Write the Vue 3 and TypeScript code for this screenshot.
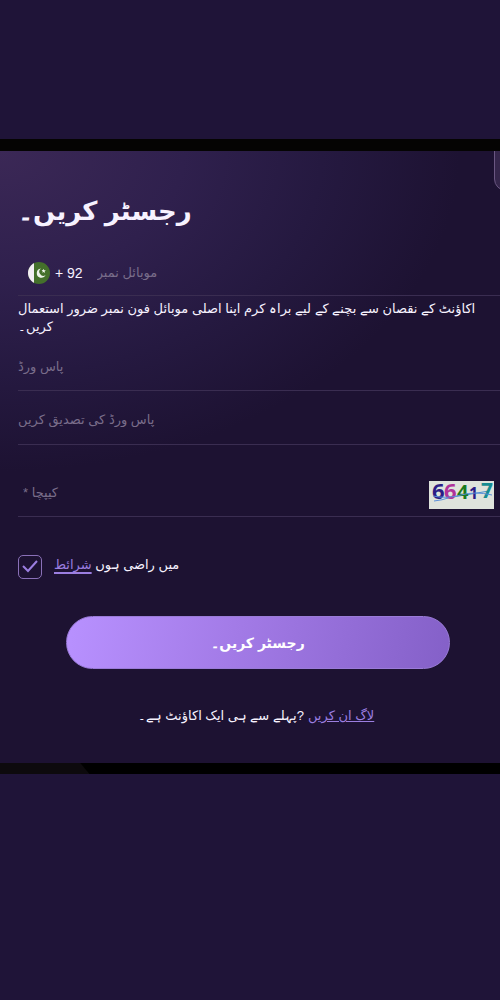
<script setup lang="ts">
import { ref } from 'vue'

const mobile = ref('')
const password = ref('')
const confirmation = ref('')
const captcha = ref('')
const agreed = ref(true)
</script>

<template>
  <div class="page" lang="ur">
    <div class="bar top"></div>
    <main class="panel">
      <div class="corner"></div>
      <h1>رجسٹر کریں۔</h1>
      <form @submit.prevent>
        <div class="field phone">
          <svg class="flag" viewBox="0 0 22 22" aria-hidden="true">
            <defs>
              <clipPath id="disc"><circle cx="11" cy="11" r="11" /></clipPath>
            </defs>
            <g clip-path="url(#disc)">
              <rect width="22" height="22" fill="#44702b" />
              <rect width="6" height="22" fill="#f3eef4" />
              <path d="M13 6.6a4.6 4.6 0 1 0 4.6 6.4 3.7 3.7 0 1 1-4.6-6.4z" fill="#eef3ea" />
              <path d="M15.6 6.8l.7 1.4 1.6.1-1.2 1 .4 1.6-1.4-.9-1.4.7.4-1.5-1.1-1.1 1.5-.1z" fill="#eef3ea" />
            </g>
          </svg>
          <span class="code">+ 92</span>
          <input v-model="mobile" type="tel" placeholder="موبائل نمبر" aria-label="موبائل نمبر" />
        </div>
        <p class="hint">اکاؤنٹ کے نقصان سے بچنے کے لیے براہ کرم اپنا اصلی موبائل فون نمبر ضرور استعمال کریں۔</p>
        <div class="field password">
          <input v-model="password" type="password" placeholder="پاس ورڈ" aria-label="پاس ورڈ" />
        </div>
        <div class="field confirm">
          <input v-model="confirmation" type="password" placeholder="پاس ورڈ کی تصدیق کریں" aria-label="پاس ورڈ کی تصدیق کریں" />
        </div>
        <div class="field captcha">
          <input v-model="captcha" type="text" placeholder="* کیپچا" aria-label="کیپچا" />
          <svg class="code-image" viewBox="0 0 65 28" role="img" aria-label="66417">
            <rect width="65" height="28" fill="#dfe3dc" />
            <path d="M18 17L60 10" stroke="#4a8fd0" fill="none" />
            <g font-family="Noto Sans" font-weight="bold">
              <text x="3" y="18" font-size="22" fill="#2b1c86">6</text>
              <text x="15" y="18" font-size="22" fill="#b0329a">6</text>
              <text x="28" y="18" font-size="20" fill="#197a1c">4</text>
              <text x="40" y="18" font-size="16" fill="#2b1c86">1</text>
              <text x="52" y="17" font-size="21" fill="#168c92">7</text>
            </g>
            <path d="M4 15q14 3 28-1t31 0M5 20q9-1 14-3" stroke="#5b8fd8" fill="none" />
          </svg>
        </div>
        <div class="terms">
          <input id="agree" v-model="agreed" type="checkbox" />
          <label for="agree">میں راضی ہوں <a href="#terms">شرائط</a></label>
        </div>
        <button type="submit">رجسٹر کریں۔</button>
      </form>
      <p class="login"><span>پہلے سے ہی ایک اکاؤنٹ ہے۔?</span><a href="#login">لاگ ان کریں</a></p>
    </main>
    <div class="bar bottom"></div>
  </div>
</template>

<style>
body {
  margin: 0;
  background: #1f1438;
}
</style>

<style scoped>
.page {
  box-sizing: border-box;
  min-height: 100vh;
  padding: 139px 0;
  background: #1f1438;
  color: #f7f2ff;
  font-family: "Liberation Sans", "DejaVu Sans", sans-serif;
  font-size: 13px;
}
.bar {
  height: 12px;
  background: #050403;
}
.bottom {
  height: 11px;
  background: linear-gradient(50deg, #0d0a0d 68px, #000 69px);
}
.panel {
  position: relative;
  overflow: hidden;
  padding: 36px 0 36px 18px;
  background: radial-gradient(ellipse 460px 320px at 0 0, #3b2856, #2f204d 40%, #251940 70%, #1d1232) #1d1232;
}
.corner {
  position: absolute;
  top: -12px;
  right: -20px;
  width: 26px;
  height: 52px;
  box-sizing: border-box;
  border: 1px solid #6b5782;
  border-radius: 12px;
  background: #35264b;
}
h1 {
  margin: 0;
  font-size: 26px;
  line-height: 48px;
}
.field {
  display: flex;
  align-items: center;
  border-bottom: 1px solid #3a2d51;
}
.field input {
  flex: 1;
  min-width: 0;
  padding: 0;
  border: 0;
  outline: 0;
  background: none;
  color: #f7f2ff;
  font: inherit;
  line-height: 24px;
}
.field input::placeholder {
  color: #796d8a;
  opacity: 1;
}
.phone {
  height: 44px;
  margin-top: 16px;
  padding-left: 10px;
}
.flag {
  width: 22px;
  height: 22px;
}
.code {
  margin: 0 14px 0 5px;
  font-size: 14px;
}
.hint {
  margin: 4px 18px 0 0;
  line-height: 18px;
}
.password {
  height: 46px;
  margin-top: 8px;
}
.confirm {
  height: 49px;
  padding-top: 4px;
}
.captcha {
  height: 47px;
  margin-top: 24px;
}
.captcha input {
  padding-left: 5px;
}
.code-image {
  width: 65px;
  height: 28px;
  margin: 4px 6px 0 0;
  overflow: visible;
}
.terms {
  display: flex;
  align-items: flex-start;
  gap: 12px;
  margin-top: 38px;
}
.terms label {
  line-height: 20px;
}
.terms input {
  appearance: none;
  box-sizing: border-box;
  width: 24px;
  height: 24px;
  margin: 0;
  border: 1px solid #8a70b8;
  border-radius: 5px;
}
.terms input:checked {
  background: url("data:image/svg+xml,%3Csvg xmlns='http://www.w3.org/2000/svg' viewBox='0 0 22 22'%3E%3Cpath d='M4 10l5 5 9-10' fill='none' stroke='%239b7ee0' stroke-width='2'/%3E%3C/svg%3E");
}
a {
  color: #9b7ee0;
}
.terms a {
  text-decoration-thickness: 2px;
  text-underline-offset: 3px;
}
button {
  display: block;
  width: calc(100% - 98px);
  height: 53px;
  margin: 37px 50px 0 48px;
  padding: 0;
  border: 1px solid #9a7bd8;
  border-radius: 27px;
  background: linear-gradient(100deg, #b891ff, #a27ae6 45%, #8460c8);
  color: #fff;
  font: inherit;
  font-size: 14px;
  font-weight: bold;
}
.login {
  display: flex;
  justify-content: center;
  gap: 4px;
  margin: 36px 6px 0 0;
  line-height: 22px;
}
</style>
